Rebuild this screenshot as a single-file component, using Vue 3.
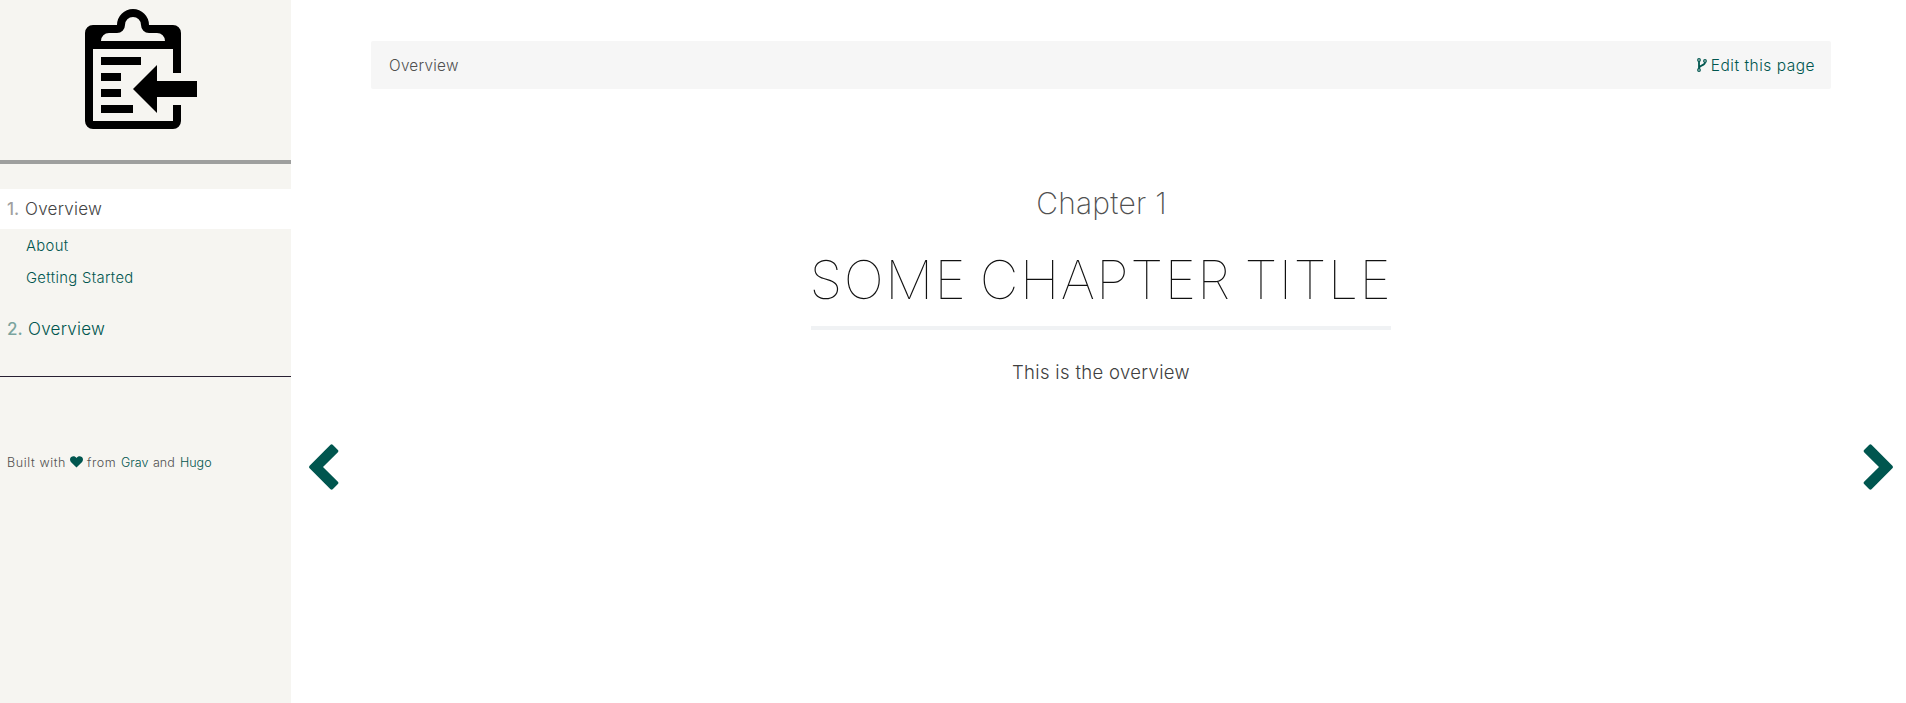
<script setup>
const topics = [
  {
    number: '1.',
    title: 'Overview',
    active: true,
    pages: [
      { title: 'About', cls: 'about' },
      { title: 'Getting Started', cls: 'started' },
    ],
  },
  { number: '2.', title: 'Overview', active: false, pages: [] },
]
</script>

<template>
  <div class="layout">
    <aside class="sidebar">
      <header class="brand">
        <svg class="logo" width="112" height="120" viewBox="85 9 112 120">
          <path
            fill-rule="evenodd"
            d="M93 25H117A16 16 0 0 1 149 25H173A8 8 0 0 1 181 33V73H173V49H93V121H173V105H181V121A8 8 0 0 1 173 129H93A8 8 0 0 1 85 121V33A8 8 0 0 1 93 25ZM101 41H165A8 8 0 0 0 157 33H149A8 8 0 0 1 141 25A8 8 0 0 0 125 25A8 8 0 0 1 117 33H109A8 8 0 0 0 101 41Z"
          />
          <path d="M101 57H141V65H101ZM101 73H121V81H101ZM101 89H121V97H101ZM101 105H133V113H101Z" />
          <path d="M133 89L157 65V81H197V97H157V113Z" />
        </svg>
      </header>
      <nav class="menu">
        <section v-for="t in topics" :key="t.number" class="topic">
          <a class="topic-link" :class="{ active: t.active }"><b class="number">{{ t.number }}</b><span class="topic-title">{{ t.title }}</span></a>
          <a v-for="p in t.pages" :key="p.title" class="page-link"><span :class="p.cls">{{ p.title }}</span></a>
        </section>
      </nav>
      <footer class="credits">
        <span class="built">Built with</span>
        <svg class="heart" width="13" height="12" viewBox="0 0 13 12"><path d="M6.5 11.5L.9 6C-.5 4.300-.1 2 1.200 1C3-.3 5.300.2 6.500 2C7.700.2 10-.3 11.800 1C13.100 2 13.500 4.300 12.100 6Z" /></svg>
        <span class="from">from</span>
        <a class="grav">Grav</a>
        <span class="and">and</span>
        <a class="hugo">Hugo</a>
      </footer>
    </aside>
    <a class="arrow prev">
      <svg width="30" height="46" viewBox="0 0 30 46"><path d="M.6 21.700L21.500.8Q22.600-.1 23.700.8L28.900 6Q29.900 7.100 28.900 8.200L14 23L28.900 37.800Q29.900 38.900 28.900 40L23.700 45.200Q22.600 46.100 21.500 45.200L.6 24.300Q-.5 23 .6 21.700Z" /></svg>
    </a>
    <main class="body">
      <div class="topbar">
        <span class="crumb">Overview</span>
        <a class="edit">
          <svg class="fork" width="10" height="14" viewBox="0 0 10 14"><circle cx="2" cy="2" r="1.300" /><circle cx="2" cy="12" r="1.300" /><circle cx="8" cy="3" r="1.300" /><path class="branch" d="M2 3.300V10.700M8 4.300C8 8 2.500 6.800 2 10" /></svg>
          <span class="edit-text">Edit this page</span>
        </a>
      </div>
      <article class="chapter">
        <h3><span>Chapter 1</span></h3>
        <h1><span>SOME CHAPTER TITLE</span></h1>
        <p><span>This is the overview</span></p>
      </article>
    </main>
    <a class="arrow next">
      <svg width="30" height="46" viewBox="0 0 30 46"><path transform="matrix(-1 0 0 1 30 0)" d="M.6 21.700L21.500.8Q22.600-.1 23.700.8L28.900 6Q29.900 7.100 28.900 8.200L14 23L28.900 37.800Q29.900 38.900 28.900 40L23.700 45.200Q22.600 46.100 21.500 45.200L.6 24.300Q-.5 23 .6 21.700Z" /></svg>
    </a>
  </div>
</template>

<style>
body { margin: 0; background: #fff; }
</style>

<style scoped>
.layout { display: flex; height: 703px; overflow: hidden; font-family: Inter, "Liberation Sans", sans-serif; font-weight: 300; color: #505050; }
.layout a { color: #00564f; }
.sidebar { width: 291px; background: #f6f5f1; flex: none; }
.brand { height: 160px; box-sizing: content-box; border-bottom: 4px solid #9e9f9e; }
.logo { display: block; padding: 9px 0 0 85px; }
.menu { padding-top: 25px; height: 187px; border-bottom: 1px solid #282033; }
.topic { margin-bottom: 15px; }
.topic-link { display: flex; align-items: center; height: 40px; padding-left: 7px; font-size: 17px; font-weight: 280; letter-spacing: .25px; }
.layout .topic-link.active { background: #fff; color: #444; }
.topic-link.active + .page-link { padding-top: 1px; }
.number { font-weight: 500; opacity: .5; width: 21px; letter-spacing: 0; }
.topic-link.active .number { width: 18px; }
.page-link { display: flex; align-items: center; height: 32px; padding-left: 26px; font-size: 14.800px; font-weight: 280; letter-spacing: .33px; }
.page-link span { line-height: 18px; }
.credits { display: flex; align-items: center; height: 20px; padding: 75px 0 0 7px; font-size: 12.500px; white-space: nowrap; }
.built { width: 59px; letter-spacing: .6px; }
.heart { margin: 0 4px; fill: #00564f; }
.from { width: 30px; letter-spacing: .6px; }
.grav { width: 28px; margin-left: 4px; }
.and { width: 24px; margin-left: 4px; }
.hugo { margin-left: 3px; }
.arrow { width: 80px; flex: none; display: flex; padding: 444px 0 0 18px; box-sizing: border-box; fill: #00564f; }
.arrow.next { width: 75px; padding-left: 32px; }
.body { flex: 1; padding-top: 41px; }
.topbar { height: 48px; border-radius: 2px; background: #f6f6f6; display: flex; align-items: center; justify-content: space-between; padding: 0 16px 0 18px; font-size: 15px; }
.crumb { font-size: 15.300px; letter-spacing: .27px; }
.edit { display: flex; align-items: center; gap: 4px; }
.edit-text { font-size: 15.500px; font-weight: 260; letter-spacing: .5px; }
.fork { fill: none; stroke: #00564f; stroke-width: 1.200; }
.branch { stroke-width: 1.800; }
.chapter { display: flex; flex-direction: column; align-items: center; }
h3, h1, p { margin: 0; font-weight: 200; }
h3 { margin-top: 94px; font-size: 30px; line-height: 40px; letter-spacing: .25px; color: #505050; }
h3 span { margin-left: 1px; }
h1 { margin-top: 22px; width: 580px; height: 81px; line-height: 70px; border-bottom: 4px solid #f0f2f4; white-space: nowrap; font-size: 53.500px; font-weight: 140; color: #111; letter-spacing: 1.450px; word-spacing: -3.800px; }
h1 span { margin-left: -1.500px; }
p { margin-top: 27px; font-size: 18.500px; line-height: 30px; font-weight: 280; letter-spacing: .33px; color: #404040; }
</style>
